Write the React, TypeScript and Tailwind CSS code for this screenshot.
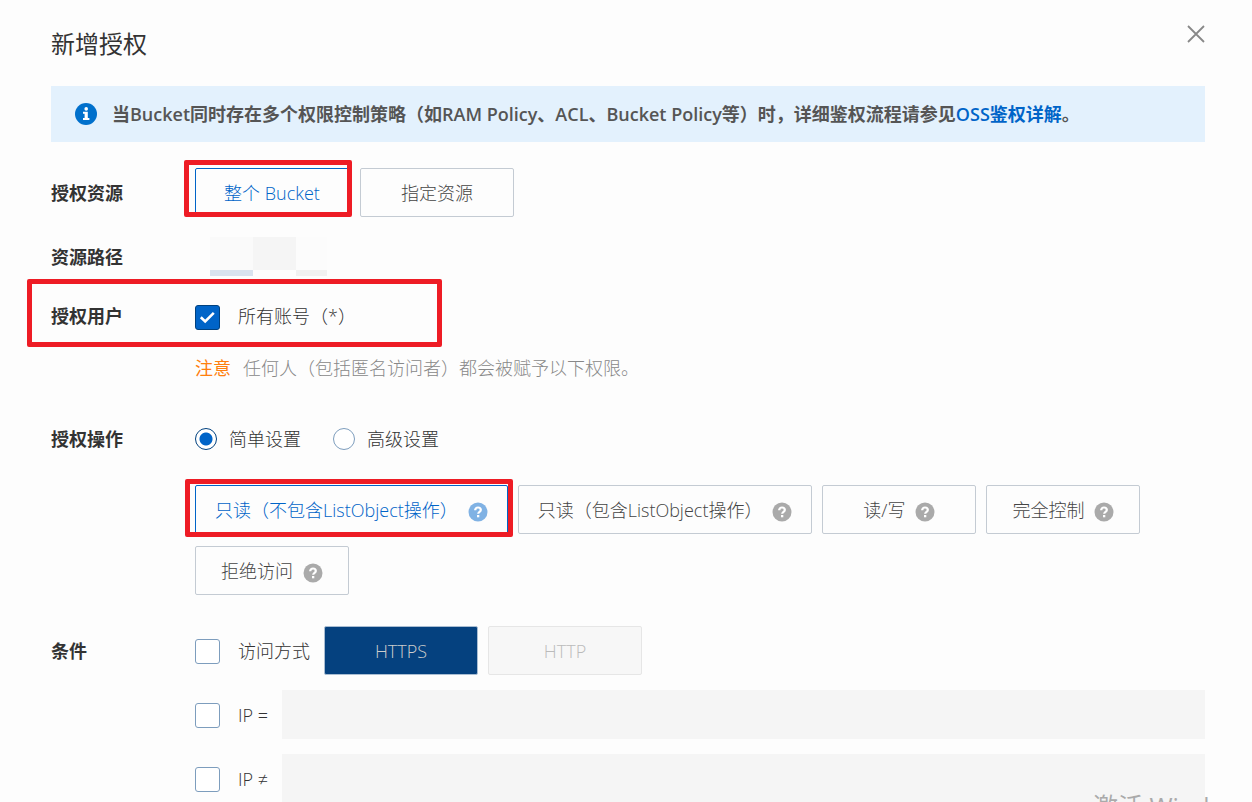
import React, { useState } from 'react';
import clsx from 'clsx';

const permissions = [
  { id: 'read', label: '只读（不包含ListObject操作）' },
  { id: 'read-list', label: '只读（包含ListObject操作）' },
  { id: 'read-write', label: '读/写' },
  { id: 'full', label: '完全控制' },
  { id: 'deny', label: '拒绝访问' },
];

function InfoIcon() {
  return (
    <svg viewBox="0 0 22 22" className="w-[22px] h-[22px] shrink-0" aria-hidden="true">
      <circle cx="11" cy="11" r="11" fill="#0070cc" />
      <circle cx="11.2" cy="5.9" r="1.8" fill="#fff" />
      <path d="M8 8.8h4.8v6.3h1.6V17H8v-1.9h1.6v-4.4H8z" fill="#fff" />
    </svg>
  );
}

function HelpIcon({ active }: { active?: boolean }) {
  return (
    <svg viewBox="0 0 20 20" className="w-5 h-5 mt-1 shrink-0" aria-hidden="true">
      <circle cx="10" cy="10" r="9.5" fill={active ? '#80b2e4' : '#aaa'} />
      <path
        d="M7.2 8.2c0-1.7 1.2-2.7 2.8-2.7s2.8 1 2.8 2.4c0 1.9-2.6 1.9-2.6 3.9"
        fill="none"
        stroke="#fff"
        strokeWidth="2.2"
      />
      <rect x="9" y="13" width="2.3" height="2.3" fill="#fff" />
    </svg>
  );
}

// Red frame drawn over the highlighted controls
function Highlight({ className }: { className: string }) {
  return (
    <span className={clsx('absolute z-10 border-5 border-[#ee1c25] rounded-xs pointer-events-none', className)} />
  );
}

function OptionButton({
  active,
  onClick,
  children,
}: {
  active?: boolean;
  onClick?: () => void;
  children: React.ReactNode;
}) {
  return (
    <button
      type="button"
      onClick={onClick}
      className={clsx(
        'flex items-center justify-center gap-[10px] h-[49px] min-w-[154px] px-[19px] border rounded-xs whitespace-nowrap',
        active ? 'border-[#0064c8] text-[#0064c8]' : 'border-[#c4cbd3] text-[#444]'
      )}
    >
      {children}
    </button>
  );
}

function Checkbox({ label, defaultChecked }: { label: string; defaultChecked?: boolean }) {
  return (
    <label className="flex items-center gap-[18px] shrink-0 whitespace-nowrap">
      <span className="grid mt-[2px]">
        <input
          type="checkbox"
          defaultChecked={defaultChecked}
          className="peer col-start-1 row-start-1 appearance-none w-[25px] h-[25px] border border-[#7d9dbd] rounded-[3px] bg-white checked:bg-[#0064c8] checked:border-[#00417f]"
        />
        <svg
          viewBox="0 0 25 25"
          className="col-start-1 row-start-1 w-[25px] h-[25px] invisible peer-checked:visible pointer-events-none"
          aria-hidden="true"
        >
          <path d="M5.8 12.2l4.4 4.3 8.6-8.6" fill="none" stroke="#fff" strokeWidth="2.6" />
        </svg>
      </span>
      {label}
    </label>
  );
}

function Radio({ label, defaultChecked }: { label: string; defaultChecked?: boolean }) {
  return (
    <label className="flex items-center gap-3">
      <input
        type="radio"
        name="mode"
        defaultChecked={defaultChecked}
        className="appearance-none w-[22px] h-[22px] rounded-full border border-[#7d9dbd] bg-white checked:border-[#00417f] checked:bg-[radial-gradient(circle,#0064c8_6px,#fff_7px)]"
      />
      {label}
    </label>
  );
}

function RowLabel({ children }: { children: React.ReactNode }) {
  return <div className="w-36 shrink-0 font-bold text-[#333]">{children}</div>;
}

export default function App() {
  const [scope, setScope] = useState('bucket');
  const [permission, setPermission] = useState('read');

  return (
    <div
      className="relative h-screen overflow-hidden bg-[#fdfdfd] font-light text-[18px] leading-6 text-[#333] font-['Open_Sans','Noto_Sans_CJK_SC',sans-serif]"
      lang="zh-CN"
    >
      <main className="pl-[51px] pr-[47px] pt-7">
        {/* Header */}
        <header className="flex items-start justify-between">
          <h1 className="text-[24px] leading-8 font-normal">新增授权</h1>
          <button type="button" aria-label="关闭" className="-mt-[3px]">
            <svg viewBox="0 0 18 18" className="w-[18px] h-[18px]" aria-hidden="true">
              <path d="M1 1l16 16M17 1L1 17" stroke="#888" strokeWidth="1.8" />
            </svg>
          </button>
        </header>

        {/* Notice */}
        <div className="flex items-center gap-[15px] min-h-14 mt-[26px] px-6 bg-[#e3f1fd] font-semibold text-[#555]">
          <InfoIcon />
          <p>
            当Bucket同时存在多个权限控制策略（如RAM Policy、ACL、Bucket Policy等）时，详细鉴权流程请参见
            <a href="#" className="text-[#0064c8]">OSS鉴权详解</a>。
          </p>
        </div>

        {/* Resource scope */}
        <section className="flex items-center mt-[26px]">
          <RowLabel>授权资源</RowLabel>
          <div className="flex gap-[11px]">
            <div className="relative">
              <OptionButton active={scope === 'bucket'} onClick={() => setScope('bucket')}>
                整个 Bucket
              </OptionButton>
              <Highlight className="-left-[11px] -right-[3px] -top-2 bottom-0" />
            </div>
            <OptionButton active={scope === 'custom'} onClick={() => setScope('custom')}>
              指定资源
            </OptionButton>
          </div>
        </section>

        {/* Resource path, masked */}
        <section className="flex items-center mt-5">
          <RowLabel>资源路径</RowLabel>
          <div className="grid grid-cols-[43px_43px_31px] grid-rows-[33px_6px] ml-[15px]">
            <span className="bg-[#fafafa]" />
            <span className="bg-[#f5f5f5]" />
            <span className="bg-[#fcfcfc]" />
            <span className="bg-[#d9e3ef]" />
            <span />
            <span className="bg-[#f1f1f1]" />
          </div>
        </section>

        {/* Users */}
        <section className="relative flex items-center h-10 mt-5">
          <RowLabel>授权用户</RowLabel>
          <Checkbox label="所有账号（*）" defaultChecked />
          <Highlight className="-left-6 -top-[17px] -bottom-[11px] w-[415px]" />
        </section>
        <p className="mt-5 ml-36 text-[#888]">
          <span className="mr-3 text-[#ff7f0e] font-normal">注意</span>
          任何人（包括匿名访问者）都会被赋予以下权限。
        </p>

        {/* Operations */}
        <section className="flex items-center h-10 mt-[39px]">
          <RowLabel>授权操作</RowLabel>
          <div className="flex gap-8">
            <Radio label="简单设置" defaultChecked />
            <Radio label="高级设置" />
          </div>
        </section>
        <div className="flex flex-wrap gap-x-[10px] gap-y-3 mt-[26px] ml-36">
          {permissions.map((item) => (
            <div key={item.id} className="relative">
              <OptionButton active={permission === item.id} onClick={() => setPermission(item.id)}>
                {item.label}
                <HelpIcon active={permission === item.id} />
              </OptionButton>
              {item.id === 'read' && <Highlight className="-left-[10px] -right-[5px] -top-[6px] -bottom-[3px]" />}
            </div>
          ))}
        </div>

        {/* Conditions */}
        <section className="flex mt-[31px]">
          <div className="flex items-center h-[49px]">
            <RowLabel>条件</RowLabel>
          </div>
          <div className="flex-1 flex flex-col gap-[15px]">
            <div className="flex items-center">
              <Checkbox label="访问方式" />
              <button
                type="button"
                className="ml-[14px] w-[154px] h-[49px] bg-[#05417f] border border-[#a9bdd2] rounded-xs text-[#ccc]"
              >
                HTTPS
              </button>
              <button
                type="button"
                disabled
                className="ml-[10px] w-[154px] h-[49px] bg-[#f7f7f7] border border-[#e6e6e6] rounded-xs text-[#bbb]"
              >
                HTTP
              </button>
            </div>
            {['IP =', 'IP ≠'].map((label) => (
              <div key={label} className="flex items-center gap-[14px]">
                <Checkbox label={label} />
                <input type="text" disabled aria-label={label} className="flex-1 min-w-0 h-[49px] px-3 bg-[#f5f5f5]" />
              </div>
            ))}
          </div>
        </section>
      </main>

      {/* System watermark, running off the bottom edge */}
      <div className="absolute right-0 bottom-0 w-[159px] h-3 overflow-hidden text-[25px] leading-8 text-[#aaa] font-normal whitespace-nowrap pointer-events-none">
        激活 Windows
      </div>
    </div>
  );
}
